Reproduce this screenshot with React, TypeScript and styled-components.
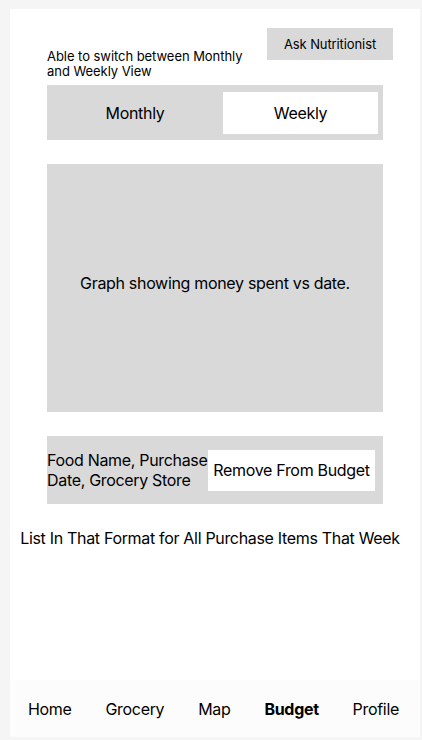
import React from "react";
import styled, { createGlobalStyle } from "styled-components";

const Global = createGlobalStyle`
  html, body { margin: 0; padding: 0; background: #f5f5f5; }
  body { font-family: Inter, "Noto Sans", sans-serif; color: #000; letter-spacing: -0.02em; }
  * { box-sizing: border-box; }
`;

const Page = styled.div`
  width: 422px;
  height: 740px;
  padding: 9px 2px 3px 10px;
`;

const Card = styled.div`
  width: 410px;
  height: 728px;
  background: #fff;
  display: flex;
  flex-direction: column;
`;

const Content = styled.div`
  flex: 1;
  display: flex;
  flex-direction: column;
  padding: 19px 37px 0 37px;
`;

const Header = styled.div`
  display: flex;
  justify-content: space-between;
  align-items: flex-start;
  margin-right: -10px;
`;

const Hint = styled.div`
  margin-top: 21px;
  font-size: 13px;
  line-height: 15px;
  letter-spacing: -0.05px;
  width: 210px;
`;

const AskButton = styled.div`
  width: 126px;
  height: 32px;
  background: #d9d9d9;
  font-size: 13px;
  letter-spacing: -0.1px;
  display: flex;
  align-items: center;
  justify-content: center;
`;

const Toggle = styled.div`
  margin-top: 6px;
  height: 55px;
  background: #d9d9d9;
  display: grid;
  grid-template-columns: 176px 155px;
  padding: 7px 5px 6px 0;
`;

const ToggleOption = styled.div<{ $active?: boolean }>`
  background: ${(p) => (p.$active ? "#fff" : "transparent")};
  display: flex;
  align-items: center;
  justify-content: center;
  font-size: 16px;
`;

const Graph = styled.div`
  margin-top: 24px;
  height: 248px;
  padding-bottom: 10px;
  background: #d9d9d9;
  display: flex;
  align-items: center;
  justify-content: center;
  font-size: 16px;
`;

const ListItem = styled.div`
  margin-top: 24px;
  height: 68px;
  background: #d9d9d9;
  display: flex;
  align-items: center;
  justify-content: space-between;
  padding: 0 8px 0 0;
`;

const ItemText = styled.div`
  font-size: 16px;
  line-height: 20px;
  width: 162px;
`;

const RemoveButton = styled.div`
  width: 168px;
  height: 41px;
  background: #fff;
  display: flex;
  align-items: center;
  justify-content: center;
  font-size: 16px;
`;

const Note = styled.div`
  margin: 24px -17px 0 -27px;
  text-align: center;
  font-size: 16px;
  line-height: 20px;
`;

const Nav = styled.nav`
  height: 57px;
  background: #fcfcfc;
  display: flex;
  justify-content: space-between;
  align-items: center;
  padding: 0 21px 0 18px;
`;

const NavItem = styled.span<{ $active?: boolean }>`
  font-size: 16px;
  font-weight: ${(p) => (p.$active ? 700 : 400)};
`;

export default function App() {
  return (
    <Page>
      <Global />
      <Card>
        <Content>
          <Header>
            <Hint>Able to switch between Monthly and Weekly View</Hint>
            <AskButton>Ask Nutritionist</AskButton>
          </Header>
          <Toggle>
            <ToggleOption>Monthly</ToggleOption>
            <ToggleOption $active>Weekly</ToggleOption>
          </Toggle>
          <Graph>Graph showing money spent vs date.</Graph>
          <ListItem>
            <ItemText>Food Name, Purchase Date, Grocery Store</ItemText>
            <RemoveButton>Remove From Budget</RemoveButton>
          </ListItem>
          <Note>List In That Format for All Purchase Items That Week</Note>
        </Content>
        <Nav>
          <NavItem>Home</NavItem>
          <NavItem>Grocery</NavItem>
          <NavItem>Map</NavItem>
          <NavItem $active>Budget</NavItem>
          <NavItem>Profile</NavItem>
        </Nav>
      </Card>
    </Page>
  );
}
